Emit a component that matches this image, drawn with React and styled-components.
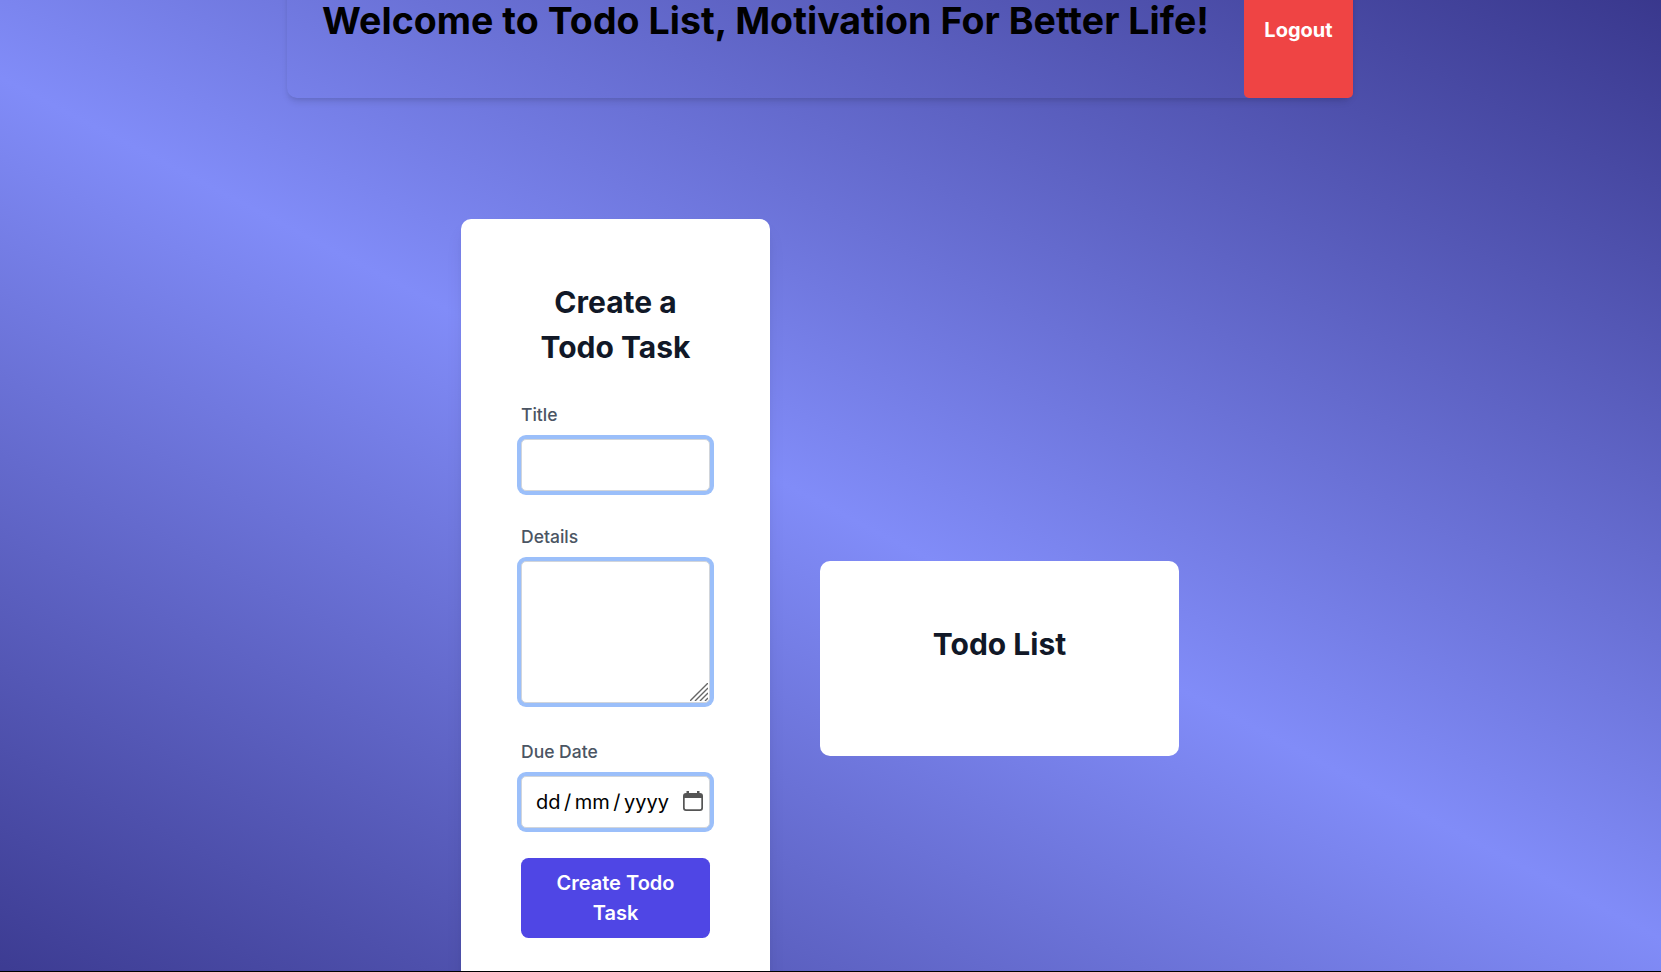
import React from 'react';
import styled, { createGlobalStyle } from 'styled-components';

const GlobalStyle = createGlobalStyle`
  *, *::before, *::after { box-sizing: border-box; }
  html, body { margin: 0; height: 100%; overflow: hidden; }
  body { font-family: Inter, "Liberation Sans", sans-serif; font-size: 20px; line-height: 30px; background: #000; }
  h1, h2 { margin: 0; }
  button, input, textarea { font: inherit; }
`;

const Viewport = styled.div`
  height: 972px;
  overflow: hidden;
  border-bottom: 1px solid #000;
`;

const Page = styled.div`
  height: 1230px;
  margin-top: -107px;
  padding-top: 69px;
  background: linear-gradient(27.4deg, #312e81, #818cf8, #312e81);
`;

const Header = styled.header`
  display: flex;
  width: 1066px;
  height: 136px;
  margin-left: 287px;
  border-radius: 10px;
  box-shadow: 0 5px 7.5px -1px rgba(0, 0, 0, 0.1), 0 2.5px 5px -2.5px rgba(0, 0, 0, 0.1);
`;

const Welcome = styled.h1`
  width: 957px;
  padding: 38px 0 0 35px;
  color: #000;
  font-size: 37.5px;
  line-height: 41px;
  font-weight: 700;
  letter-spacing: 0.04px;
  white-space: nowrap;
`;

const LogoutButton = styled.button`
  width: 109px;
  height: 136px;
  padding: 0;
  border: 0;
  border-radius: 5px;
  background: #ef4444;
  color: #fff;
  font-weight: 700;
`;

const Content = styled.main`
  display: flex;
  align-items: center;
  gap: 50px;
  margin: 121px 0 0 461px;
  height: 879px;
`;

const Card = styled.section`
  width: ${({ $width }) => $width}px;
  height: ${({ $height }) => $height};
  padding: 61px 60px 59px;
  border-radius: 10px;
  background: #fff;
  box-shadow: ${({ $raised }) => ($raised ? '0 12px 19px -4px rgba(0, 0, 0, 0.1), 0 5px 8px -5px rgba(0, 0, 0, 0.1)' : 'none')};
`;

const CardTitle = styled.h2`
  color: #111827;
  font-size: 30px;
  line-height: 45px;
  font-weight: 700;
  text-align: center;
`;

const Form = styled.form`
  display: flex;
  flex-direction: column;
  padding-top: 31px;
`;

const Field = styled.label`
  display: flex;
  flex-direction: column;
  margin-bottom: ${({ $gap }) => $gap}px;
  color: #4b5563;
  font-size: 17.5px;
  line-height: 28px;
  font-weight: 500;
`;

const inputFrame = `
  display: block;
  width: 189px;
  margin-top: 10px;
  border: 1px solid #d1d5db;
  border-radius: 5px;
  outline: none;
  background: #fff;
  color: #000;
  font-size: 20px;
  font-weight: 400;
  box-shadow: 0 0 0 4px #9bbffa;
`;

const TextInput = styled.input`
  ${inputFrame}
  height: 52px;
`;

const TextArea = styled.div`
  ${inputFrame}
  display: flex;
  align-items: flex-end;
  justify-content: flex-end;
  height: 142px;
  padding: 0 1px 1px 0;
`;

const DateInput = styled.div`
  ${inputFrame}
  display: flex;
  align-items: center;
  justify-content: space-between;
  height: 52px;
  padding: 0 6px 0 14px;
  white-space: pre;

  svg { margin-bottom: 2px; }
`;

const DateParts = styled.span`
  display: flex;
  gap: 3.5px;
`;

const SubmitButton = styled.button`
  width: 189px;
  height: 80px;
  padding: 10px 20px;
  border: 0;
  border-radius: 7.5px;
  background: #4f46e5;
  color: #fff;
  font-weight: 600;
  line-height: 30px;
`;

const ResizeGrip = () => (
  <svg width="18" height="18" viewBox="0 0 18 18" fill="none" stroke="#666" strokeWidth="1.4">
    <path d="M0 18 18 0M5 18 18 5M10 18 18 10M15 18l3-3" />
  </svg>
);

const CalendarIcon = () => (
  <svg width="20" height="20" viewBox="0 0 20 20">
    <path d="M3.5 0H6v2h8V0h2.500v2h.5a3 3 0 0 1 3 3v12a3 3 0 0 1-3 3H3a3 3 0 0 1-3-3V5a3 3 0 0 1 3-3h.5zM1.700 7v9.800A1.500 1.500 0 0 0 3.200 18.300h13.600a1.500 1.500 0 0 0 1.500-1.500V7z" fill="#555" fillRule="evenodd" />
  </svg>
);

export default function App() {
  return (
    <Viewport>
      <GlobalStyle />
      <Page>
        <Header>
          <Welcome>Welcome to Todo List, Motivation For Better Life!</Welcome>
          <LogoutButton>Logout</LogoutButton>
        </Header>
        <Content>
          <Card $width={309} $height="100%" $raised>
            <CardTitle>Create a Todo Task</CardTitle>
            <Form>
              <Field $gap={32}>Title<TextInput type="text" /></Field>
              <Field $gap={35}>Details<TextArea><ResizeGrip /></TextArea></Field>
              <Field $gap={30}>
                Due Date
                <DateInput>
                  <DateParts><span>dd</span><span>/</span><span>mm</span><span>/</span><span>yyyy</span></DateParts>
                  <CalendarIcon />
                </DateInput>
              </Field>
              <SubmitButton type="button">Create Todo Task</SubmitButton>
            </Form>
          </Card>
          <Card $width={359} $height="195px">
            <CardTitle>Todo List</CardTitle>
          </Card>
        </Content>
      </Page>
    </Viewport>
  );
}
